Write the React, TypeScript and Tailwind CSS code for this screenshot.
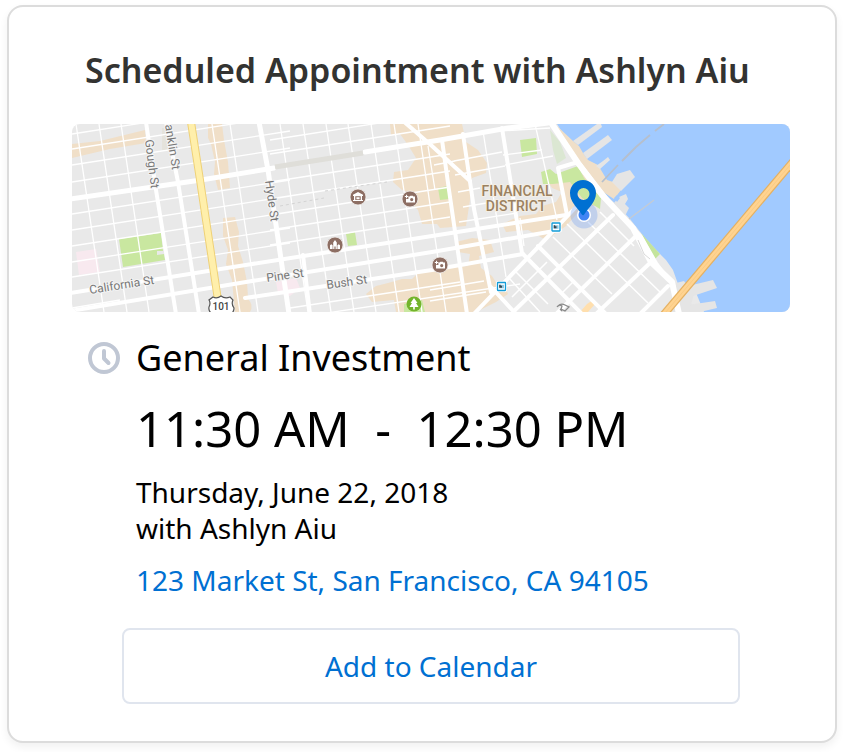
import React from "react";

type Line = [number, number, number, number];

const toPath = (lines: Line[]) =>
  lines.map(([a, b, c, d]) => `M${a} ${b}L${c} ${d}`).join("");

/* Side streets running east-west, west of the financial district */
const crossStreets: Line[] = [
  ...[134, 149, 165, 182, 214, 230, 246, 262, 277].map(
    (y): Line => [72, y, 290, y - 34],
  ),
  ...[143, 157, 185, 202, 218, 233, 248].map((y): Line => [270, y - 3, 450, y - 31]),
  [72, 308, 120, 300],
  [290, 308, 460, 282],
  [320, 314, 520, 284],
];

/* Side streets running north-south */
const upStreets: Line[] = [
  ...[76, 99, 121, 212, 230, 280, 303, 326, 348, 371, 394].map(
    (x): Line => [x, 124, x + 28, 312],
  ),
];

const somaThin: Line[] = [
  [553, 237, 612, 294],
  [567, 224, 648, 303],
  [588, 222, 660, 292],
  [600, 212, 634, 246],
  [514, 270, 548, 304],
  [573, 282, 562, 293],
  [508, 277, 540, 312],
  [547, 262, 512, 297],
];

function PlaceDot({ x, y, children }: { x: number; y: number; children: React.ReactNode }) {
  return (
    <g transform={`translate(${x} ${y})`}>
      <circle r="8" fill="#8d6e63" stroke="#f3f0ee" strokeWidth="0.8" />
      <g fill="#fff">{children}</g>
    </g>
  );
}

function Camera() {
  return (
    <path
      fillRule="evenodd"
      d="M-1.6-2.4H-.4L.4-3.2H2.8L3.4-2.4H5V3.6H-4V0H-1.6ZM1.7-1A1.6 1.6 0 1 0 1.7 2.2A1.6 1.6 0 1 0 1.7-1ZM-4-4.2H-2.9V-2.9H-1.8V-1.9H-2.9V-.8H-4V-1.9H-5.2V-2.9H-4Z"
    />
  );
}

function Transit({ x, y }: { x: number; y: number }) {
  return (
    <g transform={`translate(${x} ${y})`}>
      <rect x="-4.5" y="-4.5" width="9" height="9" rx="0.8" fill="#fff" stroke="#fff" strokeWidth="2" />
      <rect x="-4" y="-4" width="8" height="8" rx="0.5" fill="#fff" stroke="#129cd8" strokeWidth="1.3" />
      <path d="M-2.3-1.7H2.5V1.8H-2.3Z" fill="#8dc5e0" />
      <path d="M-2.3-1.7H-.8V-.7H.5V1.2H-2.3Z" fill="#37474f" />
    </g>
  );
}

function StreetMap() {
  return (
    <svg
      viewBox="72 124 718 188"
      role="img"
      aria-label="Map of the appointment location"
      className="block h-auto w-full rounded-lg"
      fontFamily="Roboto, sans-serif"
    >
      <rect x="72" y="124" width="718" height="188" fill="#e9e9e9" />

      {/* Commercial areas */}
      <g fill="#f0dfc8">
        <path d="M72 144L100 141L145 130L146 143L110 149L72 158Z" />
        <path d="M208 124H222L224 140L228 162L230 188L218 190L214 174L215 162L211 144L208 138Z" />
        <path d="M223 218L235 217L239 232L238 246L243 262L247 282L249 312H235L232 280L226 264L228 250L223 236Z" />
        <path d="M390 124H462L466 142L478 150L487 163L486 173L472 178L470 200L466 226L440 228L437 224H422L418 210L410 202L412 194L402 190L393 182L394 172L408 170L412 164L416 158L408 145L400 134L391 135Z" />
        <path d="M366 294L376 286L388 283L402 279L412 279L418 273L432 269L468 266L470 254L458 252L456 242L472 238L490 240L494 252L479 256L481 268L492 276L497 284L504 284L508 294L496 302L476 312H396L394 300L372 302Z" />
        <path d="M502 224L520 216L536 214L542 206L556 202L562 192L552 188L547 180L566 178L584 174L600 196L596 206L584 206L566 226L546 240L528 230L506 232Z" />
        <path d="M248 299Q254 305 250 312H247Z" />
      </g>
      <path d="M580 312L587 304L593 300L595 304L588 312Z" fill="#ffdfae" />

      {/* Parks and hospitals */}
      <g fill="#c9e7a0">
        <path d="M119 239L161 233L163 251H157V255L164 254L165 260L123 267Z" />
        <path d="M346 234L355 232L357 245L348 246Z" />
        <path d="M520 140L536 138L537 154L522 157Z" />
        <path d="M541 172L550 169L556 174L578 166L584 178L601 198L600 209L582 198L570 182L553 184L543 184Z" />
        <path d="M438 188L447 186L449 199L440 200Z" />
        <path d="M404 304L422 300L425 312H404Z" />
      </g>
      <path d="M550 130L560 142L566 158L557 164L553 150Z" fill="#dbe7d2" />
      <g fill="#f8e9ef">
        <path d="M76 252L96 249L100 272L79 275Z" />
        <path d="M276 282L296 278L300 288L290 296L278 293Z" />
      </g>
      <path d="M162 128H169V150H162Z" fill="#e5e3dc" />

      {/* Bay and waterfront */}
      <path
        d="M557 124H790V312H704L694 288L678 284L673 270L666 260L660 254L645 238L630 219L618 206L600 190L584 167L570 145Z"
        fill="#a1caff"
      />
      <path
        d="M557 126L573 141L579 146L583 153L588 160L598 165L607 180L613 182L621 190L614 199L600 190L584 170Z"
        fill="#f0dfc8"
      />
      <g fill="#e5e5e5">
        <path d="M573 141L597 124H601L602 127L578 145Z" />
        <path d="M583 153L608 135L612 140L587 159Z" />
        <path d="M596 166L603 161L608 157L610 160L600 169Z" />
        <path d="M612 182L617 174L630 170L635 177L621 191Z" />
        <path d="M614 203L619 197L626 194L628 199L625 204L629 208L625 216L629 220L622 218L614 207Z" />
        <path d="M688 286L713 280L717 288L690 297Z" />
        <path d="M688 305L715 301L717 308L700 312H684Z" />
        <path d="M676 283L684 281L694 294L689 312H672Z" />
      </g>
      <path d="M614 198L617 195L620 198L617 202Z" fill="#a1caff" />
      <path d="M629 219L654 200" stroke="#c5cbd3" strokeWidth="1.3" />
      <path d="M602 182L618 165M622 161L636 147L650 135M655 131L664 124" stroke="#b6bfcc" strokeWidth="1.8" fill="none" />
      <path d="M641 233L660 254L655 259Z" fill="#c4e49c" />

      {/* Side streets */}
      <g stroke="#fff" strokeWidth="1.3" fill="none">
        <path d={toPath(crossStreets)} />
        <path d={toPath(upStreets)} />
        <path d={toPath(somaThin)} strokeWidth="1.5" />
        <path d="M418 124L446 312M483 131L506 277M503 155L542 150M505 165L553 156M454 161L502 152M455 175L505 166M458 192L480 188M463 207L504 200M459 222L517 213M535 124L557 220M520 218L524 246M430 290L484 281M430 301L486 292M428 146L435 190M434 165L455 161M483 132L550 128" />
      </g>
      <path d="M280 206L324 198M325 191L387 182" stroke="#d4d4d4" strokeWidth="1" strokeDasharray="3 3" />

      {/* Main streets */}
      <g stroke="#fff" strokeWidth="4" fill="none" strokeLinejoin="round" strokeLinecap="round">
        <path d="M70 199L201 180L274 168M365 152L440 140L508 128L548 123" strokeWidth="5" />
        <path d="M70 293L252 264L432 236L566 215" />
        <path d="M70 311L252 281L432 252L560 230" />
        <path d="M245 298L432 270L523 254" />
        <path d="M146 122L156 190L176 314" />
        <path d="M166 122L178 182L199 314" />
        <path d="M259 122L268 170L289 314" strokeWidth="5" />
        <path d="M303 255L310 314" />
        <path d="M442 140L449 190L467 314" />
        <path d="M463 134L474 209L491 292" />
        <path d="M502 128L522 253" />
        <path d="M402 120L432 146L470 181" />
        <path d="M558 168L567 215M558 168L578 162L614 208" />
        <path d="M470 318L541 244L575 208" />
        <path d="M491 287L516 314M523 254L582 314M538 246L606 314" />
        <path d="M613 215L515 310M637 235L552 318M650 263L596 314M668 286L640 314" />
        <path d="M550 121L578 163L602 195L633 228L651 262L672 282L679 314" strokeWidth="6" />
        <path d="M610 203L641 236L657 264L674 286" strokeWidth="3" />
      </g>
      <path d="M638 240L644 254L650 259" stroke="#d9d9d9" fill="none" />
      <path d="M275 167L363 153" stroke="#dfded9" strokeWidth="5" />

      {/* Highways */}
      <path d="M191 122L200 180L218 300" stroke="#efd176" strokeWidth="8" fill="none" />
      <path d="M191 122L200 180L218 300" stroke="#ffefab" strokeWidth="6" fill="none" />
      <path d="M660 319L796 158" stroke="#e5b162" strokeWidth="8" />
      <path d="M660 319L796 158" stroke="#ffd390" strokeWidth="5.5" />
      <path d="M660 319L796 158" stroke="#f8c982" strokeWidth="0.8" />

      {/* Route shield */}
      <path
        d="M213 297Q217 299 221 296Q225 299 230 297L233 300Q231 304 234 308Q234 313 229 315H214Q208 312 209 307Q211 303 209 300Z"
        fill="#fff"
        stroke="#555"
        strokeWidth="1.2"
      />
      <text x="221" y="310" textAnchor="middle" fontSize="10" fontWeight="500" fill="#444">101</text>

      {/* Labels */}
      <g fontSize="12" fill="#777" stroke="#f4f4f4" strokeWidth="2" paintOrder="stroke" strokeLinejoin="round">
        <text transform="translate(145 140) rotate(83)">Gough St</text>
        <text transform="translate(165 125) rotate(81)">anklin St</text>
        <text transform="translate(265 181) rotate(82)">Hyde St</text>
        <text transform="translate(90 294) rotate(-9)">California St</text>
        <text transform="translate(267 282) rotate(-8)">Pine St</text>
        <text transform="translate(327 289) rotate(-8)">Bush St</text>
      </g>
      <g fontSize="14" fontWeight="500" fill="#9b8160" stroke="#f4eee4" strokeWidth="2" paintOrder="stroke" textAnchor="middle">
        <text x="517" y="196">FINANCIAL</text>
        <text x="516" y="211">DISTRICT</text>
      </g>

      {/* Places */}
      <PlaceDot x={358} y={197}>
        <path fillRule="evenodd" d="M0-5L5-2.2V-1H4V3H5V4H-5V3H-4V-1H-5V-2.2ZM-2.7-.8V3H2.7V-.8ZM-1.6.2H1.6V2.2H-1.6Z" />
      </PlaceDot>
      <PlaceDot x={410} y={199}>
        <Camera />
      </PlaceDot>
      <PlaceDot x={335} y={245}>
        <path d="M-5 4V.3L-3.7-.7L-2.4.3V4ZM-1.8 4V-2.5L0-5L1.8-2.5V4H.6V1.5H-.6V4ZM2.4 4V.3L3.7-.7L5 .3V4Z" />
      </PlaceDot>
      <PlaceDot x={440} y={265}>
        <Camera />
      </PlaceDot>
      <circle cx="414" cy="304" r="7.5" fill="#73b42c" />
      <path d="M414 298L417.5 303H416L418.5 307H414.8V309.5H413.2V307H409.5L412 303H410.5Z" fill="#fff" />
      <Transit x={556} y={227} />
      <Transit x={501.5} y={286.5} />
      <path
        d="M557 307Q559 304 562 306L561 309L565 311L569 307L565 305Q561 303 558 306M562 311L560 309"
        fill="none"
        stroke="#8a8a8a"
        strokeWidth="1.3"
      />

      {/* Appointment pin */}
      <circle cx="584" cy="215" r="13.5" fill="#6d9bf0" fillOpacity="0.32" />
      <circle cx="584" cy="215" r="7" fill="#fff" />
      <circle cx="584" cy="215" r="5.5" fill="#4285f4" />
      <path
        fillRule="evenodd"
        fill="#0070d2"
        d="M583 180C575.8 180 570 185.8 570 193C570 202 577 207 581.5 214Q583 216.5 584.5 214C589 207 596 202 596 193C596 185.8 590.2 180 583 180ZM583.5 188A6 6 0 1 1 583.5 200A6 6 0 1 1 583.5 188Z"
      />
    </svg>
  );
}

export default function App() {
  return (
    <main className="bg-white pt-[5px] pr-[7px] pb-[9px] pl-[7px] font-['Noto_Sans',sans-serif] text-black">
      <section className="rounded-2xl border-2 border-[#dcdcdc] bg-white pt-[39px] pr-[45px] pb-[37px] pl-[63px] shadow-[0_4px_8px_rgba(0,0,0,0.06)]">
        <h1 className="pl-[13px] text-[34px] leading-[48px] font-semibold whitespace-nowrap text-[#333331]">
          Scheduled Appointment with Ashlyn Aiu
        </h1>
        <div className="mt-[30px]">
          <StreetMap />
        </div>

        <div className="mt-5 flex gap-4 pl-4">
          <svg viewBox="0 0 32 32" aria-hidden="true" className="mt-[10px] size-8 shrink-0" fill="none" stroke="#c0c7d4" strokeWidth="4">
            <circle cx="16" cy="16" r="14" />
            <path d="M16 9V16.5L20.5 21" strokeLinecap="round" strokeLinejoin="round" />
          </svg>
          <div>
            <h2 className="text-[36px] leading-[52px]">General Investment</h2>
            <p className="mt-2 text-[49px] leading-[72px] whitespace-pre">11:30 AM  -  12:30 PM</p>
            <p className="mt-[10px] text-[28px] leading-9">Thursday, June 22, 2018</p>
            <p className="text-[28px] leading-9">with Ashlyn Aiu</p>
            <a href="#directions" className="mt-4 block text-[28px] leading-9 whitespace-nowrap text-[#0070d2]">
              123 Market St, San Francisco, CA 94105
            </a>
          </div>
        </div>

        <div className="mt-[30px] px-[50px]">
          <button
            type="button"
            className="h-[76px] w-full rounded-lg border-2 border-[#e0e5ee] bg-white text-[28px] leading-9 text-[#0070d2]"
          >
            Add to Calendar
          </button>
        </div>
      </section>
    </main>
  );
}
